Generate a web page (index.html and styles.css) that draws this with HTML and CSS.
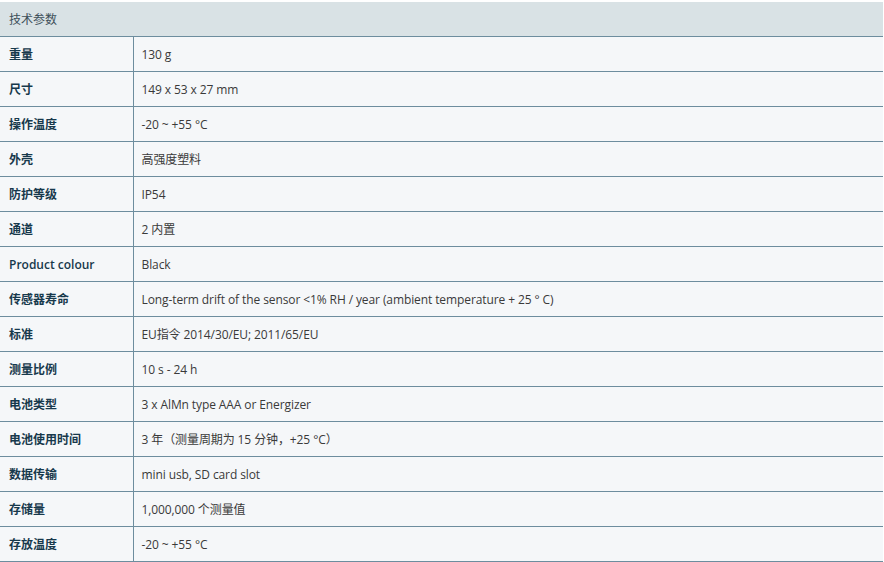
FILE: index.html
```html
<!DOCTYPE html>
<html lang="zh">
<head>
<meta charset="utf-8">
<title>技术参数</title>
<link rel="stylesheet" href="styles.css">
</head>
<body>
<table class="spec">
  <colgroup>
    <col class="col-key">
    <col class="col-val">
  </colgroup>
  <thead>
    <tr><th colspan="2" class="spec-title">技术参数</th></tr>
  </thead>
  <tbody>
    <tr><td class="key">重量</td><td class="val">130 g</td></tr>
    <tr><td class="key">尺寸</td><td class="val">149 x 53 x 27 mm</td></tr>
    <tr><td class="key">操作温度</td><td class="val">-20 ~ +55 °C</td></tr>
    <tr><td class="key">外壳</td><td class="val">高强度塑料</td></tr>
    <tr><td class="key">防护等级</td><td class="val">IP54</td></tr>
    <tr><td class="key">通道</td><td class="val">2 内置</td></tr>
    <tr><td class="key">Product colour</td><td class="val">Black</td></tr>
    <tr><td class="key">传感器寿命</td><td class="val">Long-term drift of the sensor &lt;1% RH / year (ambient temperature + 25 ° C)</td></tr>
    <tr><td class="key">标准</td><td class="val">EU指令 2014/30/EU; 2011/65/EU</td></tr>
    <tr><td class="key">测量比例</td><td class="val">10 s - 24 h</td></tr>
    <tr><td class="key">电池类型</td><td class="val">3 x AlMn type AAA or Energizer</td></tr>
    <tr><td class="key">电池使用时间</td><td class="val">3 年（测量周期为 15 分钟，+25 °C）</td></tr>
    <tr><td class="key">数据传输</td><td class="val">mini usb, SD card slot</td></tr>
    <tr><td class="key">存储量</td><td class="val">1,000,000 个测量值</td></tr>
    <tr><td class="key">存放温度</td><td class="val">-20 ~ +55 °C</td></tr>
  </tbody>
</table>
</body>
</html>
```
FILE: styles.css
```css
html, body {
  margin: 0;
  padding: 0;
  background: #ffffff;
}
body {
  padding-top: 2px;
  font-family: "Open Sans", "Noto Sans CJK SC", sans-serif;
  font-size: 12px;
  color: #333333;
}
.spec {
  width: 883px;
  border-collapse: collapse;
  table-layout: fixed;
}
.col-key {
  width: 133px;
}
.spec th, .spec td {
  padding: 0 0 0 9px;
  text-align: left;
  vertical-align: middle;
}
.spec-title {
  height: 34px;
  background: #d9e2e5;
  font-weight: normal;
  color: #3d4f59;
  border-bottom: 1px solid #6d8d9e;
}
.spec tbody tr {
  height: 35px;
  background: #f5f7f9;
}
.spec tbody td {
  height: 34px;
  border-bottom: 1px solid #6d8d9e;
}
.key {
  font-weight: 600;
  color: #17394c;
  border-right: 1px solid #6d8d9e;
}
.spec .val {
  padding-left: 8px;
  color: #3a3a3a;
  letter-spacing: -0.1px;
}
```
